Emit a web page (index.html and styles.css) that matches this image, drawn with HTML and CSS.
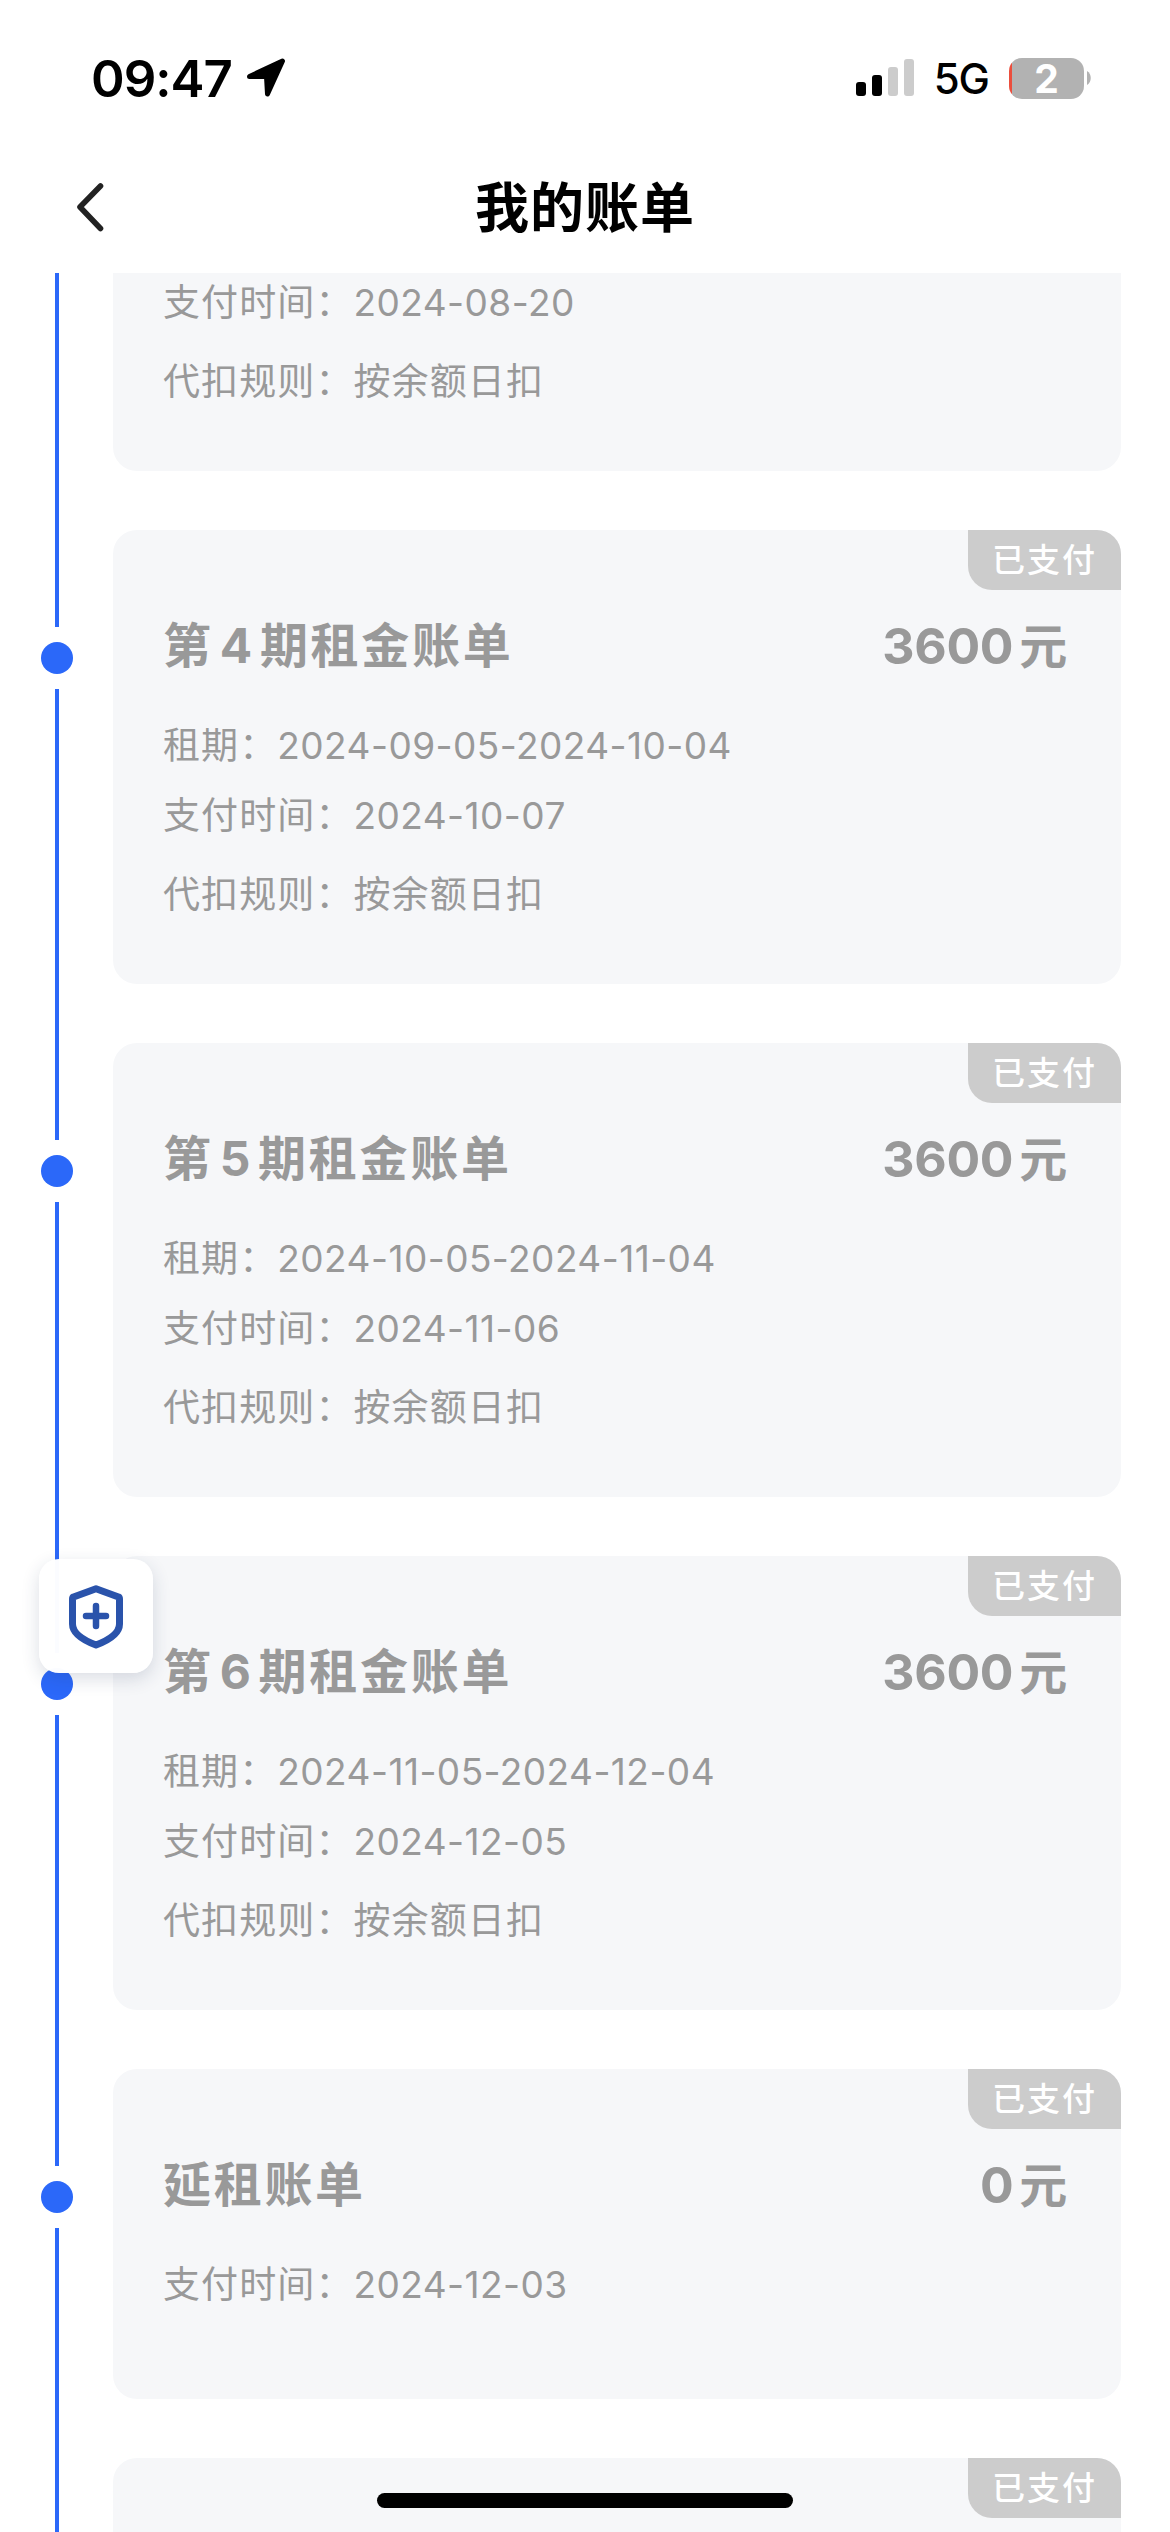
FILE: index.html
```html
<!DOCTYPE html>
<html lang="zh-CN">
<head>
    <meta charset="UTF-8">
    <meta name="viewport" content="width=device-width, initial-scale=1.0">
    <title>我的账单</title>
    <link rel="stylesheet" href="styles.css">
</head>
<body>
    <div class="status-bar">
        <div class="status-left">
            <span class="time">09:47</span>
            <svg class="location" width="40" height="40" viewBox="0 0 40 40">
                <path d="M3.5 18.5 L36.5 3 L21.5 36 L20.5 18.5 Z" fill="#000" stroke="#000" stroke-width="5" stroke-linejoin="round"/>
            </svg>
        </div>
        <div class="status-right">
            <svg class="signal" width="58" height="38" viewBox="0 0 58 38">
                <rect x="0" y="23" width="10" height="14" rx="3" fill="#000"/>
                <rect x="16" y="16" width="10" height="21" rx="3" fill="#000"/>
                <rect x="32" y="8" width="10" height="29" rx="3" fill="#ccc"/>
                <rect x="48" y="0" width="10" height="37" rx="3" fill="#ccc"/>
            </svg>
            <span class="network">5G</span>
            <div class="battery"><span>2</span></div>
            <svg class="battery-cap" width="4" height="14" viewBox="0 0 4 14">
                <path d="M0 0 C5 3 5 11 0 14 Z" fill="#b2b2b2"/>
            </svg>
        </div>
    </div>

    <header class="nav">
        <svg class="back" width="30" height="52" viewBox="0 0 30 52">
            <path d="M25.5 5 L5 26 L25.5 47.5" fill="none" stroke="#222" stroke-width="5.6" stroke-linecap="round" stroke-linejoin="round"/>
        </svg>
        <h1>我的账单</h1>
    </header>

    <main class="timeline">
        <div class="item first">
            <div class="rail"><i class="line"></i></div>
            <section class="card">
                <p>支付时间：<span>2024-08-20</span></p>
                <p class="rule">代扣规则：按余额日扣</p>
            </section>
        </div>

        <div class="item">
            <div class="rail"><i class="line top"></i><i class="dot"></i><i class="line"></i></div>
            <section class="card">
                <em class="tag">已支付</em>
                <div class="head"><h2>第<span>4</span>期租金账单</h2><strong>3600<small>元</small></strong></div>
                <p>租期：<span>2024-09-05-2024-10-04</span></p>
                <p>支付时间：<span>2024-10-07</span></p>
                <p class="rule">代扣规则：按余额日扣</p>
            </section>
        </div>

        <div class="item">
            <div class="rail"><i class="line top"></i><i class="dot"></i><i class="line"></i></div>
            <section class="card">
                <em class="tag">已支付</em>
                <div class="head"><h2>第<span>5</span>期租金账单</h2><strong>3600<small>元</small></strong></div>
                <p>租期：<span>2024-10-05-2024-11-04</span></p>
                <p>支付时间：<span>2024-11-06</span></p>
                <p class="rule">代扣规则：按余额日扣</p>
            </section>
        </div>

        <div class="item">
            <div class="rail"><i class="line top"></i><i class="dot"></i><i class="line"></i></div>
            <section class="card">
                <em class="tag">已支付</em>
                <div class="head"><h2>第<span>6</span>期租金账单</h2><strong>3600<small>元</small></strong></div>
                <p>租期：<span>2024-11-05-2024-12-04</span></p>
                <p>支付时间：<span>2024-12-05</span></p>
                <p class="rule">代扣规则：按余额日扣</p>
            </section>
        </div>

        <div class="item">
            <div class="rail"><i class="line top"></i><i class="dot"></i><i class="line"></i></div>
            <section class="card short">
                <em class="tag">已支付</em>
                <div class="head"><h2>延租账单</h2><strong>0<small>元</small></strong></div>
                <p>支付时间：<span>2024-12-03</span></p>
            </section>
        </div>

        <div class="item">
            <div class="rail"><i class="line top"></i></div>
            <section class="card">
                <em class="tag">已支付</em>
            </section>
        </div>
    </main>

    <!-- floating insurance button -->
    <div class="float-btn">
        <svg width="56" height="66" viewBox="0 0 56 66">
            <path d="M28 4.8 L50.5 13 Q51.5 13.5 51.5 15 V40 C51.5 50 40 56.5 28 61 C16 56.5 4.5 50 4.5 40 V15 Q4.5 13.5 5.5 13 Z" fill="none" stroke="#2a53ab" stroke-width="7" stroke-linejoin="round"/>
            <path d="M28 22 V42 M18 32 H38" stroke="#2a53ab" stroke-width="6.5" stroke-linecap="round"/>
        </svg>
    </div>
    <div class="home-bar"></div>
</body>
</html>
```
FILE: styles.css
```css
* {
    box-sizing: border-box;
    margin: 0;
    padding: 0;
}

body {
    width: 1170px;
    height: 2532px;
    overflow: hidden;
    background-color: #fff;
    font-family: Inter, "Noto Sans CJK SC", sans-serif;
    display: flex;
    flex-direction: column;
}

.status-bar {
    flex: none;
    height: 143px;
    padding: 50px 79px 0 91px;
    display: flex;
    justify-content: space-between;
}

.status-left,
.status-right {
    height: 56px;
    display: flex;
    align-items: center;
}

.time {
    font-size: 51px;
    font-weight: 600;
    letter-spacing: -1px;
}

.location {
    margin-left: 14px;
}

.network {
    margin-left: 20px;
    font-size: 42px;
    font-weight: 500;
    letter-spacing: -1px;
}

.battery {
    width: 75px;
    height: 41px;
    margin-left: 20px;
    border-radius: 13px;
    background: linear-gradient(to right, #eb4e3d 3px, #b2b2b2 3px);
    color: #fff;
    font-size: 39px;
    font-weight: 700;
    line-height: 41px;
    text-align: center;
}

.battery-cap {
    margin-left: 3px;
}

.nav {
    flex: none;
    height: 130px;
    padding: 0 75px;
    display: grid;
    grid-template-columns: 30px 1fr 30px;
    align-items: center;
}

.back {
    margin-bottom: 2px;
}

.nav h1 {
    margin-bottom: 8px;
    font-size: 54px;
    font-weight: 600;
    letter-spacing: 1px;
    text-align: center;
}

.timeline {
    flex: 1;
    overflow: hidden;
}

.item {
    display: flex;
}

.rail {
    width: 113px;
    display: flex;
    flex-direction: column;
    align-items: center;
    gap: 15px;
}

.line {
    width: 4px;
    flex: 1;
    background-color: #2b68f9;
}

.line.top {
    flex: none;
    height: 97px;
}

.dot {
    width: 32px;
    height: 32px;
    border-radius: 50%;
    background-color: #2b68f9;
}

.card {
    width: 1008px;
    height: 454px;
    margin-bottom: 59px;
    padding: 81px 54px 0 50px;
    position: relative;
    border-radius: 24px;
    background-color: #f6f7f9;
    color: #999;
}

.card.short {
    height: 330px;
}

.first .card {
    height: 198px;
    padding-top: 0;
    border-radius: 0 0 24px 24px;
}

.tag {
    position: absolute;
    top: 0;
    right: 0;
    width: 153px;
    height: 60px;
    padding-left: 24px;
    border-radius: 0 24px 0 24px;
    background-color: #ccc;
    color: #fff;
    font-size: 33px;
    font-style: normal;
    font-weight: 500;
    letter-spacing: 2px;
    line-height: 60px;
}

.head {
    height: 70px;
    margin-bottom: 30px;
    display: flex;
    justify-content: space-between;
    align-items: center;
}

.head h2 {
    font-size: 48px;
    font-weight: 600;
    letter-spacing: 2.7px;
    line-height: 70px;
}

.head h2 span {
    margin: 0 5px 0 6px;
    font-weight: 700;
}

.head strong {
    font-size: 50px;
    font-weight: 700;
    letter-spacing: -0.3px;
    line-height: 70px;
}

.head small {
    margin-left: 6px;
    font-size: 48px;
    font-weight: 600;
}

.card p {
    height: 70px;
    font-size: 37px;
    letter-spacing: 1.1px;
    line-height: 69px;
    white-space: nowrap;
}

.card p.rule {
    margin-top: 9px;
}

/* dates are set a little tighter than the labels */
.card p span {
    letter-spacing: 0.45px;
}

.first .card p:first-child {
    height: 65px;
    line-height: 59px;
}

.float-btn {
    position: absolute;
    left: 39px;
    top: 1559px;
    width: 114px;
    height: 114px;
    padding-top: 2px;
    border-radius: 20px;
    background-color: rgba(255, 255, 255, 0.98);
    box-shadow: 0 6px 18px rgba(30, 50, 90, 0.16);
    display: flex;
    align-items: center;
    justify-content: center;
}

.home-bar {
    position: absolute;
    left: 377px;
    top: 2493px;
    width: 416px;
    height: 15px;
    border-radius: 8px;
    background-color: #000;
}
```
